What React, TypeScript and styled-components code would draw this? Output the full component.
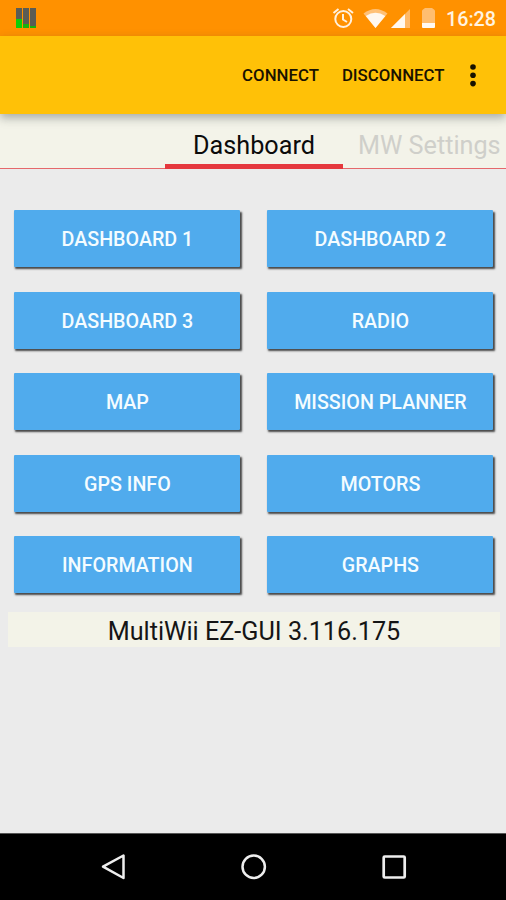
import React from "react";
import styled, { createGlobalStyle } from "styled-components";

const GlobalStyle = createGlobalStyle`
  * { box-sizing: border-box; }
  body { margin: 0; background: #ebebeb; font-family: Roboto, sans-serif; }
`;

const Screen = styled.div`
  display: flex;
  flex-direction: column;
  width: 506px;
  height: 900px;
  overflow: hidden;
  background: #ebebeb;
`;

const StatusBar = styled.header`
  display: flex;
  flex: none;
  align-items: center;
  justify-content: space-between;
  height: 36px;
  padding: 0 10px 0 16px;
  background: #ff9100;
`;

const StatusIcons = styled.div`
  display: flex;
  align-items: center;
`;

const Clock = styled.time`
  width: 50px;
  margin-left: 9px;
  padding-top: 2px;
  color: #fff4e2;
  font-size: 19.7px;
  font-weight: 500;
  line-height: 35px;
  white-space: nowrap;
`;

const ActionBar = styled.div`
  display: flex;
  position: relative;
  z-index: 1;
  flex: none;
  align-items: center;
  justify-content: flex-end;
  height: 78.4px;
  padding-right: 27px;
  background: #ffc107;
  box-shadow: 0 4px 9px rgba(40, 50, 50, 0.36);
`;

const Action = styled.button`
  margin: 0 23px 0 0;
  padding: 0;
  border: 0;
  background: none;
  color: #191200;
  font: 500 16.8px/24px Roboto, sans-serif;

  &:nth-of-type(2) {
    margin-right: 22.5px;
  }
`;

const Tabs = styled.nav`
  display: flex;
  flex: none;
  height: 54.6px;
  padding-left: 165px;
  border-bottom: 1.5px solid #e5686b;
  background: #f3f3e9;
`;

const Tab = styled.div<{ $active?: boolean }>`
  flex: none;
  width: 178px;
  height: 54.6px;
  padding-left: ${({ $active }) => ($active ? 0 : 15)}px;
  border-bottom: ${({ $active }) => ($active ? "5px solid #e5383d" : "0")};
  color: ${({ $active }) => ($active ? "#0b0b0b" : "#cfcfca")};
  font-size: 25.2px;
  line-height: 63px;
  text-align: ${({ $active }) => ($active ? "center" : "left")};
  white-space: nowrap;
`;

const Content = styled.main`
  flex: 1;
  padding: 41px 6px 0 8px;
`;

const ButtonGrid = styled.div`
  display: grid;
  grid-template-columns: 226px 226px;
  grid-auto-rows: 57px;
  gap: 24.6px 27px;
  padding-left: 6.4px;
`;

const PanelButton = styled.button`
  padding: 1px 0 0;
  border: 0;
  border-radius: 1px;
  background: #50abed;
  box-shadow: 1.5px 2px 2px rgba(25, 25, 25, 0.78);
  color: #f4fcff;
  font: 500 19.7px/57px Roboto, sans-serif;
  text-align: center;
`;

const Version = styled.p`
  height: 35px;
  margin: 18.4px 0 0;
  background: #f3f3e8;
  color: #151515;
  font-size: 25.2px;
  line-height: 39px;
  text-align: center;
`;

const NavigationBar = styled.footer`
  display: flex;
  flex: none;
  align-items: center;
  justify-content: space-between;
  height: 67px;
  padding: 0 96px 0 97px;
  border-top: 1px solid #555;
  background: #000;
`;

const Icon = styled.svg`
  display: block;
  flex: none;
`;

const panels = [
  "DASHBOARD 1", "DASHBOARD 2", "DASHBOARD 3", "RADIO", "MAP",
  "MISSION PLANNER", "GPS INFO", "MOTORS", "INFORMATION", "GRAPHS",
];

const LevelsIcon = () => (
  <Icon width="20" height="21" viewBox="0 0 20 21">
    <path fill="#5b5c55" d="M0 0h6v20H0zM7 0h6v20H7zM14 0h6v20h-6z" />
    <path fill="#0ccf06" d="M0 11h6v9H0z" />
    <path fill="#18b20c" d="M7 16h6v4H7zM14 18h6v2h-6z" />
  </Icon>
);

const SystemIcons = () => (
  <Icon width="106" height="36" viewBox="331 0 106 36">
    <g fill="none" stroke="#fff1df" strokeWidth="2">
      <circle cx="343.3" cy="19" r="8" />
      <path d="M343 14v5.5l4 2.5M333.5 13l5-4M353 13l-5-4" />
    </g>
    <path fill="#ffc177" d="M363.5 13.5Q375.5 4.5 387.5 13.5L375.5 28z" />
    <path fill="#fff8ef" d="M365.8 16Q375.5 9.5 385.3 16L375.5 28z" />
    <path fill="#ffb967" d="M391 28L410 9v19z" />
    <path fill="#fff8ef" d="M391 28L405 14v14z" />
    <path fill="#ffbe70" d="M422 11q0-1 1-1.500l2-1.500h7l2 1.500q1 .5 1 1.500v13h-13z" />
    <path fill="#fffaf3" d="M422 23h13v4q0 1-1 1h-11q-1 0-1-1z" />
  </Icon>
);

export default function App() {
  return (
    <Screen>
      <GlobalStyle />
      <StatusBar>
        <LevelsIcon />
        <StatusIcons>
          <SystemIcons />
          <Clock>16:28</Clock>
        </StatusIcons>
      </StatusBar>
      <ActionBar>
        <Action>CONNECT</Action>
        <Action>DISCONNECT</Action>
        <Icon width="12" height="24" viewBox="0 0 12 24" fill="#171100">
          <circle cx="6" cy="4" r="2.8" />
          <circle cx="6" cy="12.2" r="2.8" />
          <circle cx="6" cy="20.6" r="2.8" />
        </Icon>
      </ActionBar>
      <Tabs>
        <Tab $active>Dashboard</Tab>
        <Tab>MW Settings</Tab>
      </Tabs>
      <Content>
        <ButtonGrid>
          {panels.map((label) => (
            <PanelButton key={label}>{label}</PanelButton>
          ))}
        </ButtonGrid>
        <Version>MultiWii EZ-GUI 3.116.175</Version>
      </Content>
      <NavigationBar>
        <Icon width="32" height="32" viewBox="0 0 32 32" fill="none" stroke="#eee" strokeWidth="2.5" strokeLinejoin="round">
          <path d="M26.5 4.5v22.500L6 15.700z" />
        </Icon>
        <Icon width="32" height="32" viewBox="0 0 32 32" fill="none" stroke="#eee" strokeWidth="2.5">
          <circle cx="15.7" cy="15.8" r="11.2" />
        </Icon>
        <Icon width="32" height="32" viewBox="0 0 32 32" fill="none" stroke="#eee" strokeWidth="2.7">
          <rect x="5.7" y="5.5" width="21" height="21" rx="1" />
        </Icon>
      </NavigationBar>
    </Screen>
  );
}
